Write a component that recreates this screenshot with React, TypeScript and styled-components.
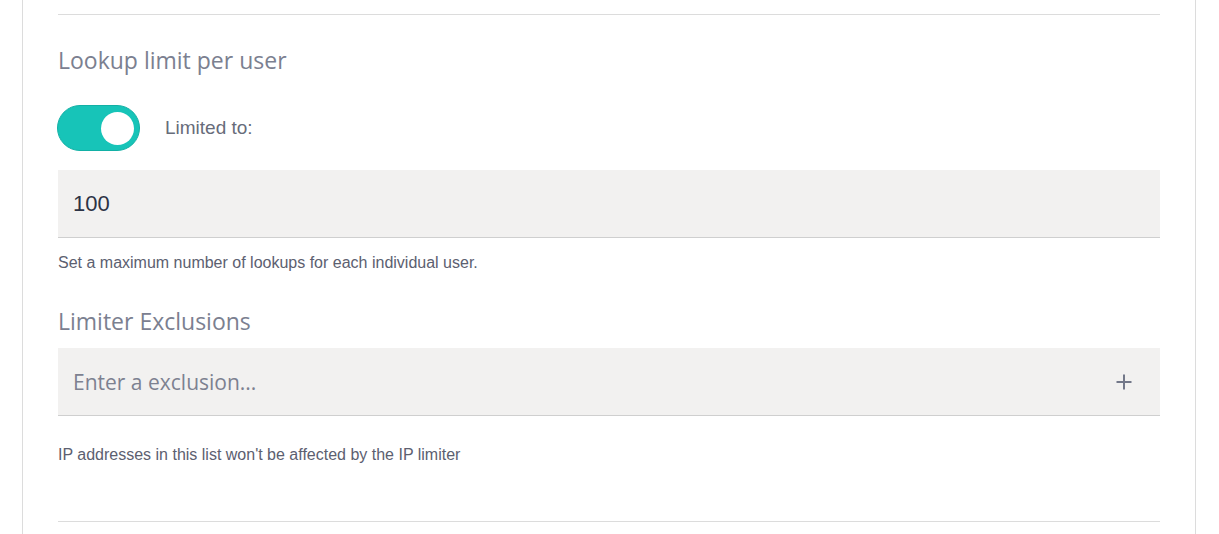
import React from "react";
import styled, { createGlobalStyle } from "styled-components";

const Global = createGlobalStyle`
  html, body { margin: 0; padding: 0; background: #fff; }
  body { font-family: "Liberation Sans", Arial, sans-serif; }
`;

const Page = styled.div`
  padding: 0 23px 0 22px;
  height: 534px;
  box-sizing: border-box;
`;

const Panel = styled.div`
  border-left: 1px solid #dcdcdc;
  border-right: 1px solid #dcdcdc;
  height: 100%;
  padding: 14px 35px 0 35px;
  box-sizing: border-box;
  display: flex;
  flex-direction: column;
`;

const Divider = styled.hr<{ $bottom?: number }>`
  border: 0;
  border-top: 1px solid #dcdcdc;
  margin: 0 0 ${(p) => p.$bottom ?? 0}px 0;
`;

const Heading = styled.h3<{ $top: number }>`
  margin: ${(p) => p.$top}px 0 0 0;
  font-family: "Open Sans", sans-serif;
  font-weight: 400;
  font-size: 23px;
  line-height: 28px;
  color: #7b8090;
`;

const ToggleRow = styled.label`
  display: flex;
  align-items: center;
  gap: 25px;
  margin-top: 31px;
  margin-left: -1px;
`;

const Switch = styled.span<{ $on: boolean }>`
  position: relative;
  width: 83px;
  height: 46px;
  border-radius: 23px;
  box-sizing: border-box;
  background: ${(p) => (p.$on ? "#17c4b8" : "#ccc")};
  border: 1px solid ${(p) => (p.$on ? "#12b0a5" : "#bbb")};
  flex-shrink: 0;
`;

const Knob = styled.span`
  position: absolute;
  top: 6px;
  right: 5px;
  width: 33px;
  height: 33px;
  border-radius: 50%;
  background: #fff;
`;

const ToggleLabel = styled.span`
  font-size: 19px;
  color: #676c7a;
`;

const InputBox = styled.div<{ $top: number }>`
  margin-top: ${(p) => p.$top}px;
  height: 68px;
  box-sizing: border-box;
  background: #f2f1f0;
  border-bottom: 1px solid #cfcfcf;
  display: flex;
  align-items: center;
  padding: 0 28px 0 15px;
`;

const Value = styled.span`
  font-size: 22px;
  color: #2c3345;
  flex: 1;
`;

const Placeholder = styled.span`
  font-family: "Open Sans", sans-serif;
  font-size: 21px;
  color: #7d8190;
  flex: 1;
`;

const Help = styled.p<{ $top: number }>`
  margin: ${(p) => p.$top}px 0 0 0;
  font-size: 16px;
  line-height: 20px;
  color: #5c6070;
`;

const Plus = styled.svg`
  display: block;
`;

const Spacer = styled.div`
  flex: 1;
`;

export default function App() {
  return (
    <>
      <Global />
      <Page>
        <Panel>
          <Divider />
          <Heading $top={31}>Lookup limit per user</Heading>
          <ToggleRow>
            <Switch $on>
              <Knob />
            </Switch>
            <ToggleLabel>Limited to:</ToggleLabel>
          </ToggleRow>
          <InputBox $top={19}>
            <Value>100</Value>
          </InputBox>
          <Help $top={15}>Set a maximum number of lookups for each individual user.</Help>
          <Heading $top={34}>Limiter Exclusions</Heading>
          <InputBox $top={13}>
            <Placeholder>Enter a exclusion...</Placeholder>
            <Plus width="16" height="16" viewBox="0 0 16 16">
              <path d="M8 0.5v15M0.5 8h15" stroke="#737889" strokeWidth="2" />
            </Plus>
          </InputBox>
          <Help $top={29}>IP addresses in this list won't be affected by the IP limiter</Help>
          <Spacer />
          <Divider $bottom={12} />
        </Panel>
      </Page>
    </>
  );
}
